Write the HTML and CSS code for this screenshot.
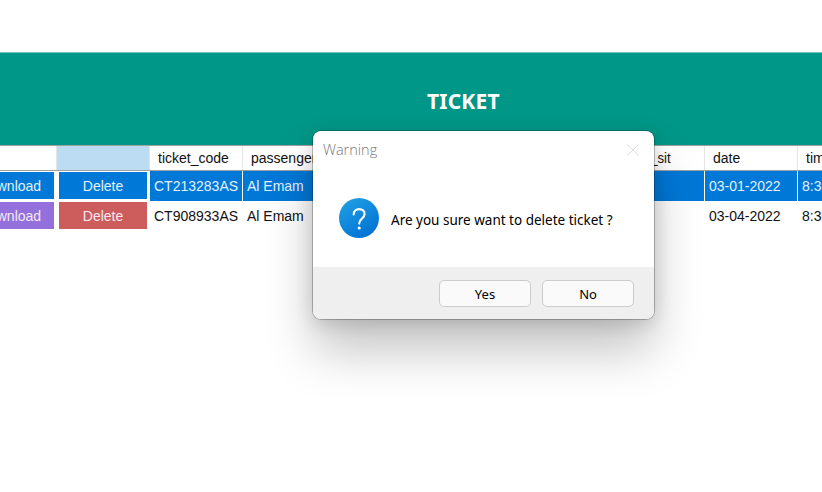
FILE: index.html
```html
<!DOCTYPE html>
<html lang="en">
<head>
<meta charset="utf-8">
<title>Ticket</title>
<link rel="stylesheet" href="styles.css">
</head>
<body>
<header class="banner"><h1>TICKET</h1></header>
<main class="grid">
  <div class="row head">
    <div class="cell"></div><div class="cell active"></div>
    <div class="cell"><span class="t-code">ticket_code</span></div>
    <div class="cell"><span class="t-pass">passenger_name</span></div>
    <div class="cell sit"><span>booked_sit</span></div>
    <div class="cell"><span class="t-date">date</span></div>
    <div class="cell"><span>time</span></div>
  </div>
  <div class="row selected">
    <div class="action"><button class="download"><span>Download</span></button></div>
    <div class="action"><button class="delete"><span>Delete</span></button></div>
    <div class="cell"><span class="code">CT213283AS</span></div>
    <div class="cell"><span class="name">Al Emam</span></div>
    <div class="cell"></div>
    <div class="cell"><span class="day">03-01-2022</span></div>
    <div class="cell"><span class="time">8:30</span></div>
  </div>
  <div class="row">
    <div class="action"><button class="download"><span>Download</span></button></div>
    <div class="action"><button class="delete"><span>Delete</span></button></div>
    <div class="cell"><span class="code">CT908933AS</span></div>
    <div class="cell"><span class="name">Al Emam</span></div>
    <div class="cell"></div>
    <div class="cell"><span class="day">03-04-2022</span></div>
    <div class="cell"><span class="time">8:30</span></div>
  </div>
</main>
<section class="dialog" role="dialog">
  <div class="titlebar">
    <span class="title">Warning</span>
    <svg class="close" width="12" height="12" viewBox="0 0 12 12"><path d="M.5.5l11 11M11.5.5l-11 11" fill="none" stroke="#dedede"/></svg>
  </div>
  <div class="message">
    <svg width="40" height="40" viewBox="0 0 40 40">
      <defs><linearGradient id="blue" x1=".2" y1="0" x2=".8" y2="1"><stop offset="0" stop-color="#209fe5"/><stop offset="1" stop-color="#0070d2"/></linearGradient></defs>
      <circle cx="20" cy="20" r="20" fill="url(#blue)"/>
      <path d="M14.7 16.4C14.7 13.2 17 11.1 20.2 11.1c3.2 0 5.4 1.9 5.4 4.8 0 2.3-1.1 3.5-2.9 5-1.7 1.4-2.4 2.3-2.4 4.2v.5" fill="none" stroke="#fff" stroke-width="2.1" stroke-linecap="round"/>
      <circle cx="20.2" cy="30" r="1.6" fill="#fff"/>
    </svg>
    <p>Are you sure want to delete ticket ?</p>
  </div>
  <div class="footer"><button>Yes</button><button>No</button></div>
</section>
</body>
</html>
```
FILE: styles.css
```css
* { box-sizing: border-box; }
body { margin: 0; height: 492px; padding-top: 52px; overflow: hidden; background: #fff; font: 14px/16px "Liberation Sans", Arial, sans-serif; color: #111; }
button { margin: 0; padding: 0; border: 0; font: inherit; color: inherit; }
.banner { height: 93px; padding: 33px 0 0 427px; background: #009788; border-top: 1px solid #75c5bd; }
h1 { margin: 0; font: 700 21px/30px "Noto Sans", sans-serif; letter-spacing: 0.2px; color: #fff; }
.grid { border-top: 1px solid #a0a0a0; width: 822px; overflow: hidden; }
.row { display: grid; grid-template-columns: 93px 93px 93px 92px 370px 93px 93px; width: 927px; margin-left: -36px; height: 30px; }
.head { height: 25px; border-bottom: 1px solid #a0a0a0; }
.cell { display: flex; align-items: center; padding-left: 4px; border-right: 1px solid #fff; white-space: nowrap; overflow: hidden; }
.cell span, .action span { display: block; transform-origin: 0 50%; }
.head .cell { padding-left: 8px; border-color: #e5e5e5; }
.head .active { background: #bcdcf3; }
.head .sit { padding-left: 272px; }
.sit span { transform: scaleX(.94); }
.selected .cell { background: #0078d7; color: #e5f1fb; }
.action { padding: 1px 2px 2px; border-right: 1px solid #fff; display: flex; }
.action button { display: flex; width: 100%; align-items: center; justify-content: center; color: #f5e9f0; }
.action button span { transform-origin: 50% 50%; }
.download { background: #9370db; }
.delete { background: #cd5c5c; }
.selected button { background: #0078d7; color: #e5f1fb; }
.dialog { position: absolute; left: 313px; top: 131px; width: 341px; height: 188px; border-radius: 8px; background: #fff; overflow: hidden; display: flex; flex-direction: column; box-shadow: 0 0 0 1px rgba(0,0,0,.24), 0 32px 50px rgba(0,0,0,.23), 0 4px 18px rgba(0,0,0,.14); }
.titlebar { display: flex; justify-content: space-between; align-items: center; height: 38px; padding: 0 15px 0 10px; }
.title { font: 300 14.5px/20px "Open Sans", "Noto Sans", sans-serif; color: #777; }
.message { display: flex; align-items: center; height: 98px; padding: 0 0 0 26px; gap: 12px; }
.message p { margin: 3px 0 0; font: 13.5px/20px "Noto Sans", sans-serif; white-space: nowrap; color: #000; }
.footer { display: flex; justify-content: flex-end; height: 52px; background: #efefef; padding: 13px 20px 0 0; gap: 11px; }
.footer button { width: 92px; height: 27px; border: 1px solid #ccc; border-radius: 5px; background: #fafafa; font: 13px/20px "Noto Sans", sans-serif; color: #000; }
```
